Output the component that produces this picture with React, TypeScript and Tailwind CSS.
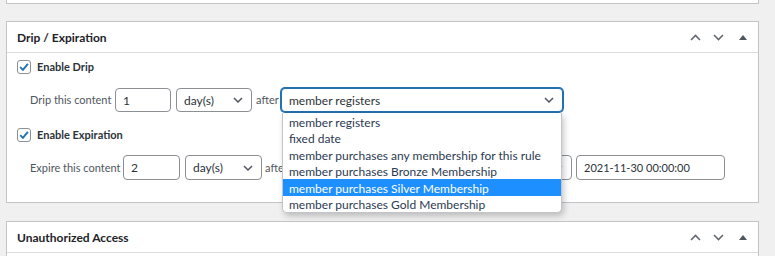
import React from "react";

const FONT = "font-['Lato','Liberation_Sans',sans-serif]";

function HeaderIcons() {
  return (
    <div className="flex items-center h-full pr-[2px] shrink-0">
      <div className="w-[23px] flex justify-center">
        <svg width="11" height="7" viewBox="0 0 11 7">
          <polyline points="1,6 5.5,1.5 10,6" fill="none" stroke="#646970" strokeWidth="1.6" />
        </svg>
      </div>
      <div className="w-[23px] flex justify-center">
        <svg width="11" height="7" viewBox="0 0 11 7">
          <polyline points="1,1 5.5,5.5 10,1" fill="none" stroke="#646970" strokeWidth="1.6" />
        </svg>
      </div>
      <div className="w-[26px] flex justify-center">
        <svg width="8" height="5" viewBox="0 0 8 5">
          <polygon points="0,5 4,0 8,5" fill="#50575e" />
        </svg>
      </div>
    </div>
  );
}

function Header({ title }: { title: string }) {
  return (
    <div className="h-[31px] flex items-center justify-between border-b border-[#dcdcde]">
      <div className="pl-[10px] pt-[1px] text-[12px] font-bold text-[#1d2327] whitespace-nowrap">{title}</div>
      <HeaderIcons />
    </div>
  );
}

function Checkbox() {
  return (
    <div className="shrink-0 w-[14px] h-[14px] rounded-[3px] border border-[#8c8f94] bg-white flex items-center justify-center">
      <svg width="12" height="12" viewBox="0 0 12 12">
        <polyline points="2.2,6.2 4.9,8.9 9.9,2.8" fill="none" stroke="#2271b1" strokeWidth="1.9" />
      </svg>
    </div>
  );
}

function SelectChevron() {
  return (
    <svg width="10" height="6" viewBox="0 0 10 6" className="shrink-0">
      <polyline points="1,1 5,5 9,1" fill="none" stroke="#50575e" strokeWidth="1.5" />
    </svg>
  );
}

function TextInput({ value, w, h, size }: { value: string; w: string; h: string; size: string }) {
  return (
    <div className={`shrink-0 ${w} ${h} ${size} border border-[#8c8f94] rounded-[4px] bg-white flex items-center pl-[7px] pt-[1px] text-[#2c3338] whitespace-nowrap`}>
      {value}
    </div>
  );
}

function Select({ value, w, h, focus }: { value: string; w: string; h: string; focus?: boolean }) {
  return (
    <div
      className={`shrink-0 ${w} ${h} rounded-[4px] bg-white flex items-center justify-between pl-[7px] pr-[8px] text-[12px] text-[#2c3338] whitespace-nowrap border ${
        focus ? "border-[#2271b1] shadow-[0_0_0_1px_#2271b1]" : "border-[#8c8f94]"
      }`}
    >
      <span className="pt-[1px]">{value}</span>
      <SelectChevron />
    </div>
  );
}

const OPTIONS = [
  "member registers",
  "fixed date",
  "member purchases any membership for this rule",
  "member purchases Bronze Membership",
  "member purchases Silver Membership",
  "member purchases Gold Membership",
];

export default function App() {
  return (
    <div className={`w-[775px] h-[256px] overflow-hidden bg-[#f0f0f1] pl-[6px] ${FONT}`}>
      <div className="w-[753px] h-[4px] bg-white border-x border-b border-[#c3c4c7]" />

      <div className="mt-[17px] w-[753px] bg-white border border-[#c3c4c7]">
        <Header title="Drip / Expiration" />
        <div className="pt-[7px] pb-[22px] pl-[10px]">
          <div className="h-[14px] flex items-center">
            <Checkbox />
            <span className="ml-[6px] pt-[1px] text-[11px] font-bold text-[#2c3338] whitespace-nowrap">Enable Drip</span>
          </div>

          <div className="mt-[14px] h-[24px] flex items-center ml-[13px]">
            <div className="shrink-0 w-[85px] pt-[1px] text-[11px] text-[#50575e] whitespace-nowrap">Drip this content</div>
            <TextInput value="1" w="w-[56px]" h="h-[24px]" size="text-[12px]" />
            <div className="ml-[5px] shrink-0">
              <Select value="day(s)" w="w-[76px]" h="h-[24px]" />
            </div>
            <div className="shrink-0 w-[29px] pl-[4px] pt-[1px] text-[11px] text-[#50575e] whitespace-nowrap">after</div>
            <div className="relative shrink-0">
              <Select value="member registers" w="w-[282px]" h="h-[24px]" focus />
              <div className="absolute left-[1px] top-[25px] w-[280px] z-10 bg-white border border-[#c3c4c7] border-t-0 rounded-b-[5px] shadow-[2px_3px_6px_rgba(0,0,0,0.22)] overflow-hidden">
                {OPTIONS.map((o, i) => (
                  <div
                    key={o}
                    className={`h-[16.5px] flex items-center pl-[6px] pt-[3px] text-[12px] whitespace-nowrap ${
                      i === 4 ? "bg-[#1e8fff] text-white" : "text-[#2c3a52]"
                    }`}
                  >
                    {o}
                  </div>
                ))}
              </div>
            </div>
          </div>

          <div className="mt-[16px] h-[14px] flex items-center">
            <Checkbox />
            <span className="ml-[6px] pt-[1px] text-[11px] font-bold text-[#2c3338] whitespace-nowrap">Enable Expiration</span>
          </div>

          <div className="mt-[13px] h-[25px] flex items-center ml-[13px]">
            <div className="shrink-0 w-[93px] pt-[1px] text-[11px] text-[#50575e] whitespace-nowrap">Expire this content</div>
            <TextInput value="2" w="w-[57px]" h="h-[25px]" size="text-[12px]" />
            <div className="ml-[5px] shrink-0">
              <Select value="day(s)" w="w-[77px]" h="h-[25px]" />
            </div>
            <div className="shrink-0 w-[30px] pl-[3px] pt-[1px] text-[11px] text-[#50575e] whitespace-nowrap">after</div>
            <Select value="" w="w-[280px]" h="h-[25px]" />
            <div className="ml-[4px] shrink-0">
              <TextInput value="2021-11-30 00:00:00" w="w-[149px]" h="h-[25px]" size="text-[11px]" />
            </div>
          </div>
        </div>
      </div>

      <div className="mt-[18px] w-[753px] bg-white border border-[#c3c4c7]">
        <Header title="Unauthorized Access" />
        <div className="h-[20px]" />
      </div>
    </div>
  );
}
